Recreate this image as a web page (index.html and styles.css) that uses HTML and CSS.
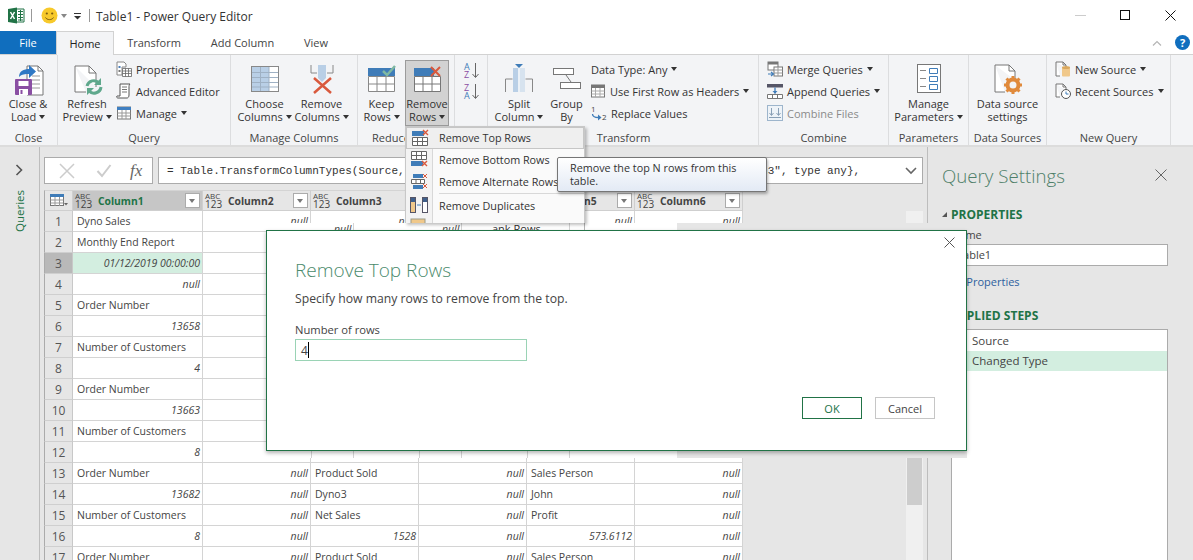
FILE: index.html
```html
<!DOCTYPE html>
<html lang="en">
<head>
    <meta charset="UTF-8">
    <meta name="viewport" content="width=device-width, initial-scale=1.0">
    <title>Table1 - Power Query Editor</title>
    <link rel="stylesheet" href="styles.css">
</head>
<body>

<div class="window">

    <!-- Title bar -->
    <header class="titlebar">
        <svg class="app-icon" width="17" height="17" viewBox="0 0 17 17"><path d="M6 2h10v13H6z" fill="#fff" stroke="#217346"/><path d="M10 4.500h5M10 7.500h5M10 10.500h5M10 13h5M12.500 3v11" stroke="#217346"/><path d="M0 2l9-1.500v16L0 15z" fill="#217346"/><path d="M2.500 5l4 7M6.500 5l-4 7" stroke="#fff" stroke-width="1.500"/></svg>
        <span class="qat-sep"></span>
        <svg class="smiley" width="17" height="17" viewBox="0 0 17 17"><circle cx="8.500" cy="8.500" r="8" fill="#f7c92b"/><circle cx="5.800" cy="6.500" r="1.100" fill="#7a5a10"/><circle cx="11.200" cy="6.500" r="1.100" fill="#7a5a10"/><path d="M4.500 10.500c1.500 2.800 6.500 2.800 8 0" fill="none" stroke="#7a5a10"/></svg>
        <span class="caret caret-grey qat-caret"></span>
        <svg class="qat-custom" width="8" height="8" viewBox="0 0 8 8"><path d="M0 1.500h7" stroke="#333"/><path d="M0 4h7L3.500 7.500z" fill="#333"/></svg>
        <span class="qat-sep qat-sep-2"></span>
        <span class="app-title">Table1 - Power Query Editor</span>
        <div class="win-controls">
            <svg width="11" height="11" viewBox="0 0 11 11"><path d="M0 5.500h11" stroke="#ccc"/></svg>
            <svg width="11" height="11" viewBox="0 0 11 11"><rect x=".5" y=".5" width="9" height="9" fill="none" stroke="#111"/></svg>
            <svg width="11" height="11" viewBox="0 0 11 11"><path d="M.5.500l10 10M10.500.500l-10 10" stroke="#111"/></svg>
        </div>
    </header>

    <!-- Tabs -->
    <nav class="tabs">
        <a class="tab tab-file">File</a>
        <a class="tab tab-home">Home</a>
        <a class="tab tab-transform">Transform</a>
        <a class="tab tab-add">Add Column</a>
        <a class="tab tab-view">View</a>
        <div class="tab-right">
            <svg width="10" height="6" viewBox="0 0 10 6"><path d="M1 5.500l4-4 4 4" fill="none" stroke="#b5b5b5" stroke-width="1.200"/></svg>
            <span class="help">?</span>
        </div>
    </nav>

    <!-- Ribbon -->
    <section class="ribbon">
        <div class="group g-close">
            <div class="group-body">
                <div class="large w56">
                    <div class="large-icon">
                        <svg width="32" height="32" viewBox="0 0 32 32"><path d="M15 3h11l5 5v24H15z" fill="#fff" stroke="#777"/><path d="M26 3v5h5" fill="none" stroke="#777"/><path d="M20 13h8M20 17h8M20 21h8M20 25h8" stroke="#999"/><path d="M7 14c0-6 5-8 10-8V2l7 6.500-7 6.500v-4c-4 0-7 0-10 3z" fill="#2f78c4"/><rect x="3" y="16" width="17" height="16" rx="1" fill="#8a4fa3"/><rect x="6.500" y="18" width="10" height="5" fill="#fff"/><rect x="7" y="26" width="9" height="6" fill="#fff"/><rect x="8.500" y="27" width="2" height="4" fill="#8a4fa3"/></svg>
                    </div>
                    <span>Close &amp;</span>
                    <span>Load <i class="caret"></i></span>
                </div>
            </div>
            <div class="group-label">Close</div>
        </div>

        <div class="group g-query">
            <div class="group-body">
                <div class="large w58">
                    <div class="large-icon">
                        <svg width="30" height="32" viewBox="0 0 30 32"><path d="M3 3h14l7 7v14M14 29H3V3" fill="#fff" stroke="#777"/><path d="M17 3v7h7" fill="none" stroke="#777"/><path d="M15 23a7 7 0 0 1 12-3" fill="none" stroke="#5fa88c" stroke-width="3"/><path d="M29 24a7 7 0 0 1-12 4" fill="none" stroke="#5fa88c" stroke-width="3"/><path d="M29 15v7h-7zM15 32v-7h7z" fill="#5fa88c"/></svg>
                    </div>
                    <span>Refresh</span>
                    <span>Preview <i class="caret"></i></span>
                </div>
                <div class="small-col">
                    <div class="small">
                        <svg width="16" height="16" viewBox="0 0 16 16"><path d="M1 1h7l2 2v3H6v8H1z" fill="#fff" stroke="#888"/><rect x="2.500" y="5" width="2" height="2" fill="#4a7ebb"/><rect x="2.500" y="9" width="2" height="2" fill="#777"/><path d="M6.500 7.500h9v8h-9zM6.500 10h9M6.500 12.500h9M9.500 7.500v8M12.500 7.500v8" fill="#fff" stroke="#666" stroke-width=".8"/></svg>
                        <span>Properties</span>
                    </div>
                    <div class="small">
                        <svg width="16" height="16" viewBox="0 0 16 16"><path d="M4 1h10c-1 1-1 2-1 3v8c0 2-1 3-2 3H2c-1 0-2-1-1-2h3z" fill="#fff" stroke="#555"/><path d="M6 4h5M6 6.500h5M6 9h5" stroke="#777"/></svg>
                        <span>Advanced Editor</span>
                    </div>
                    <div class="small">
                        <svg width="16" height="16" viewBox="0 0 16 16"><rect x="1.500" y="2" width="13" height="12" fill="#fff" stroke="#777"/><rect x="1" y="2" width="14" height="3" fill="#3f7fc1"/><path d="M1.500 8h13M1.500 11h13M6 5v9M10 5v9" stroke="#999"/></svg>
                        <span>Manage</span><i class="caret"></i>
                    </div>
                </div>
            </div>
            <div class="group-label">Query</div>
        </div>

        <div class="group g-manage">
            <div class="group-body">
                <div class="large w57">
                    <div class="large-icon">
                        <svg width="30" height="30" viewBox="0 0 30 30"><rect x="1.500" y="2.500" width="27" height="25" fill="#fff" stroke="#888"/><rect x="2" y="3" width="17" height="24" fill="#b9cfe6"/><path d="M2 8.500h26M2 13.500h26M2 18.500h26M2 23h26M10.500 3v24M19 3v24" stroke="#9fb1c4"/></svg>
                    </div>
                    <span>Choose</span>
                    <span>Columns <i class="caret"></i></span>
                </div>
                <div class="large w57">
                    <div class="large-icon">
                        <svg width="24" height="32" viewBox="0 0 24 32"><path d="M1 2v8h6M23 2v8h-6" fill="none" stroke="#888"/><path d="M8 2h8v13l-4 4-4-4z" fill="#b9cfe6"/><path d="M3 14l17 15M20 14L3 29" stroke="#d9593d" stroke-width="2.500" transform="translate(1 1)"/></svg>
                    </div>
                    <span>Remove</span>
                    <span>Columns <i class="caret"></i></span>
                </div>
            </div>
            <div class="group-label">Manage Columns</div>
        </div>

        <div class="group g-reduce">
            <div class="group-body">
                <div class="large w47">
                    <div class="large-icon">
                        <svg width="29" height="30" viewBox="0 0 29 30"><rect x="1" y="4" width="27" height="8" fill="#3f7cb8"/><path d="M1.500 12.500h26v15h-26zM1.500 20h26M10 12.500v15M19 12.500v15" fill="#fff" stroke="#888"/><path d="M16 7l4 4 8-9" fill="none" stroke="#7fb8a2" stroke-width="2.500"/></svg>
                    </div>
                    <span>Keep</span>
                    <span>Rows <i class="caret"></i></span>
                </div>
                <div class="large w44 active">
                    <div class="large-icon">
                        <svg width="29" height="30" viewBox="0 0 29 30"><rect x="1" y="4" width="20" height="8" fill="#3f7cb8"/><path d="M1.500 12.500h26v15h-26zM1.500 20h26M10 12.500v15M19 12.500v15" fill="#fff" stroke="#777"/><path d="M18 3l9 9M27 3l-9 9" stroke="#d9593d" stroke-width="2"/></svg>
                    </div>
                    <span>Remove</span>
                    <span>Rows <i class="caret"></i></span>
                </div>
            </div>
            <div class="group-label">Reduce Rows</div>
        </div>

        <div class="group g-sort">
            <div class="group-body sort-col">
                <svg width="16" height="17" viewBox="0 0 16 17"><text class="sort-a" x="0" y="8">A</text><text class="sort-z" x="0" y="16">Z</text><path d="M11.500 1v14M8.500 12l3 3.500 3-3.500" fill="none" stroke="#666"/></svg>
                <svg width="16" height="17" viewBox="0 0 16 17"><text class="sort-z" x="0" y="8">Z</text><text class="sort-a" x="0" y="16">A</text><path d="M11.500 1v14M8.500 12l3 3.500 3-3.500" fill="none" stroke="#666"/></svg>
            </div>
            <div class="group-label"></div>
        </div>

        <div class="group g-transform">
            <div class="group-body">
                <div class="large w56">
                    <div class="large-icon">
                        <svg width="30" height="32" viewBox="0 0 30 32"><path d="M1.500 29V16h7M28.500 29V16h-7" fill="none" stroke="#888"/><rect x="9" y="5" width="12" height="24" fill="#d7e3ef"/><rect x="9" y="5" width="5" height="24" fill="#b9cfe6"/><path d="M11 1h8l-4 4z" fill="#3f7cb8"/><path d="M15 5v24" stroke="#fff"/></svg>
                    </div>
                    <span>Split</span>
                    <span>Column <i class="caret"></i></span>
                </div>
                <div class="large w39">
                    <div class="large-icon">
                        <svg width="30" height="24" viewBox="0 0 30 24"><rect x="1.500" y="1.500" width="20" height="6" fill="#fff" stroke="#777"/><rect x="8.500" y="15.500" width="20" height="6" fill="#fff" stroke="#777"/><path d="M14 8l5 7" stroke="#777"/></svg>
                    </div>
                    <span>Group</span>
                    <span>By</span>
                </div>
                <div class="small-col col-data">
                    <div class="small">
                        <span>Data Type: Any</span><i class="caret"></i>
                    </div>
                    <div class="small">
                        <svg width="14" height="14" viewBox="0 0 14 14"><rect x=".5" y="1" width="13" height="12" fill="#fff" stroke="#777"/><rect x="0" y="1" width="14" height="3" fill="#777"/><path d="M.5 7h13M.5 10h13M4.500 4v9M9 4v9" stroke="#aaa"/></svg>
                        <span class="wide-gap">Use First Row as Headers</span><i class="caret"></i>
                    </div>
                    <div class="small">
                        <svg width="16" height="16" viewBox="0 0 16 16"><text class="replace-num" x="0" y="7">1</text><text class="replace-num" x="11" y="15">2</text><path d="M1.500 9c0 3 2 3.500 6 3.500" fill="none" stroke="#3f7cb8" stroke-width="1.300"/><path d="M7 9.500l3.500 3-3.500 3z" fill="#3f7cb8"/></svg>
                        <span>Replace Values</span>
                    </div>
                </div>
            </div>
            <div class="group-label label-transform">Transform</div>
        </div>

        <div class="group g-combine">
            <div class="group-body">
                <div class="small-col">
                    <div class="small">
                        <svg width="16" height="16" viewBox="0 0 16 16"><rect x="1" y="1" width="10" height="8" fill="#fff" stroke="#777"/><rect x="1" y="1" width="10" height="2.500" fill="#777"/><rect x="7" y="6" width="8.500" height="9" fill="#fff" stroke="#777"/><path d="M7 9h8.500M7 12h8.500M11 6v9" stroke="#999"/><path d="M1 13h5M4 11l2.500 2L4 15" fill="none" stroke="#3f7cb8" stroke-width="1.200"/></svg>
                        <span>Merge Queries</span><i class="caret"></i>
                    </div>
                    <div class="small">
                        <svg width="16" height="16" viewBox="0 0 16 16"><rect x="0" y="1" width="16" height="3.500" fill="#556"/><path d="M.5 11.500h15v4H.5zM5.500 11.500v4M10.500 11.500v4" fill="#fff" stroke="#777"/><path d="M8 4.500v6" stroke="#3f7cb8" stroke-width="1.300"/><path d="M5.500 8L8 10.800 10.500 8z" fill="#3f7cb8"/></svg>
                        <span>Append Queries</span><i class="caret"></i>
                    </div>
                    <div class="small small-off">
                        <svg width="16" height="16" viewBox="0 0 16 16"><rect x=".5" y=".5" width="15" height="15" fill="#eef3f8" stroke="#9db5cc"/><path d="M4.500 3v7M11.500 3v7M2 12.500h12" stroke="#8aa0b6"/><path d="M2.500 8l2 2.500 2-2.500M9.500 8l2 2.500 2-2.500" fill="none" stroke="#8aa0b6"/></svg>
                        <span>Combine Files</span>
                    </div>
                </div>
            </div>
            <div class="group-label">Combine</div>
        </div>

        <div class="group g-params">
            <div class="group-body">
                <div class="large w80">
                    <div class="large-icon">
                        <svg width="24" height="30" viewBox="0 0 24 30"><rect x=".5" y=".5" width="23" height="28" fill="#fff" stroke="#777"/><path d="M3 6.500h6M3 14.500h6M3 22.500h6" stroke="#888"/><path d="M12.500 4.500h8v5h-8zM12.500 12.500h8v5h-8zM12.500 20.500h8v5h-8z" fill="#fff" stroke="#3f7cb8"/></svg>
                    </div>
                    <span>Manage</span>
                    <span>Parameters <i class="caret"></i></span>
                </div>
            </div>
            <div class="group-label">Parameters</div>
        </div>

        <div class="group g-data">
            <div class="group-body">
                <div class="large w78">
                    <div class="large-icon">
                        <svg width="28" height="30" viewBox="0 0 28 30"><path d="M1 1h14l6 6v9M11 28H1V1" fill="#fff" stroke="#777"/><path d="M15 1v6h6" fill="none" stroke="#777"/><circle cx="19" cy="21" r="5.500" fill="none" stroke="#e08a3c" stroke-width="4"/><path d="M19 12v4M19 26v4M10 21h4M24 21h4M12.500 14.500l3 3M22.500 24.500l3 3M25.500 14.500l-3 3M15.500 24.500l-3 3" stroke="#e08a3c" stroke-width="3"/></svg>
                    </div>
                    <span>Data source</span>
                    <span>settings</span>
                </div>
            </div>
            <div class="group-label">Data Sources</div>
        </div>

        <div class="group g-new">
            <div class="group-body">
                <div class="small-col col-new">
                    <div class="small">
                        <svg width="16" height="16" viewBox="0 0 16 16"><path d="M1 1h7l3 3v3M5 15H1V1" fill="#fff" stroke="#777"/><path d="M8 1v3h3" fill="none" stroke="#777"/><rect x="7" y="6" width="8" height="9.500" rx="1" fill="#f0c88a"/><ellipse cx="11" cy="6.500" rx="4" ry="1.500" fill="#d9a85f"/></svg>
                        <span>New Source</span><i class="caret"></i>
                    </div>
                    <div class="small">
                        <svg width="16" height="16" viewBox="0 0 16 16"><path d="M1 1h7l3 3v3M5 14H1V1" fill="#fff" stroke="#777"/><path d="M8 1v3h3" fill="none" stroke="#777"/><circle cx="11" cy="11" r="4.500" fill="#fff" stroke="#555"/><path d="M11 8.500V11h2.500" fill="none" stroke="#3f7cb8"/></svg>
                        <span>Recent Sources</span><i class="caret"></i>
                    </div>
                </div>
            </div>
            <div class="group-label">New Query</div>
        </div>
    </section>

    <!-- Main area -->
    <main class="main">
        <aside class="queries">
            <svg width="9" height="12" viewBox="0 0 9 12"><path d="M1.500 1l5 5-5 5" fill="none" stroke="#555" stroke-width="1.600"/></svg>
            <span class="queries-label">Queries</span>
        </aside>

        <section class="center">
            <div class="formula-row">
                <div class="formula-btns">
                    <svg width="16" height="16" viewBox="0 0 16 16"><path d="M1 1l14 14M15 1L1 15" stroke="#ccc" stroke-width="1.500"/></svg>
                    <svg width="16" height="14" viewBox="0 0 16 14"><path d="M1.500 7l4.500 5 8.500-11" fill="none" stroke="#ccc" stroke-width="2"/></svg>
                    <span class="fx">fx</span>
                </div>
                <div class="formula-input">
                    <span class="formula-text">= Table.TransformColumnTypes(Source,{{"Column1", type any}, {"Column2", type any}, {"Column3", type any},</span>
                    <svg width="12" height="7" viewBox="0 0 12 7"><path d="M1 1l5 5 5-5" fill="none" stroke="#666" stroke-width="1.600"/></svg>
                </div>
            </div>

            <div class="grid-row">
                <table class="data-table">
                    <colgroup>
                        <col class="col-num"><col class="col-first"><col class="col-rest"><col class="col-rest"><col class="col-rest"><col class="col-rest"><col class="col-rest">
                    </colgroup>
                    <thead>
                        <tr>
                            <th class="corner">
                                <svg width="18" height="13" viewBox="0 0 18 13"><rect x=".5" y=".5" width="13" height="11" fill="#fff" stroke="#777"/><rect x="0" y="0" width="14" height="3" fill="#3f7cb8"/><path d="M.5 6h13M.5 9h13M5 3v9M9.500 3v9" stroke="#999"/><path d="M14 9h4l-2 2.500z" fill="#666"/></svg>
                            </th>
                            <th class="head-selected"><div class="head"><span class="type">ABC<b>123</b></span><span class="head-name green">Column1</span><span class="drop"></span></div></th>
                            <th><div class="head"><span class="type">ABC<b>123</b></span><span class="head-name">Column2</span><span class="drop"></span></div></th>
                            <th><div class="head"><span class="type">ABC<b>123</b></span><span class="head-name">Column3</span></div></th>
                            <th></th>
                            <th><div class="head head-clip"><span class="head-name">Column5</span><span class="drop"></span></div></th>
                            <th><div class="head"><span class="type">ABC<b>123</b></span><span class="head-name">Column6</span><span class="drop"></span></div></th>
                        </tr>
                    </thead>
                    <tbody>
                        <tr><th>1</th><td>Dyno Sales</td><td class="n">null</td><td class="n">null</td><td></td><td class="n">null</td><td class="n">null</td></tr>
                        <tr><th>2</th><td>Monthly End Report</td><td></td><td></td><td></td><td></td><td></td></tr>
                        <tr class="row-selected"><th>3</th><td class="n">01/12/2019 00:00:00</td><td></td><td></td><td></td><td></td><td></td></tr>
                        <tr><th>4</th><td class="n">null</td><td></td><td></td><td></td><td></td><td></td></tr>
                        <tr><th>5</th><td>Order Number</td><td></td><td></td><td></td><td></td><td></td></tr>
                        <tr><th>6</th><td class="n">13658</td><td></td><td></td><td></td><td></td><td></td></tr>
                        <tr><th>7</th><td>Number of Customers</td><td></td><td></td><td></td><td></td><td></td></tr>
                        <tr><th>8</th><td class="n">4</td><td></td><td></td><td></td><td></td><td></td></tr>
                        <tr><th>9</th><td>Order Number</td><td></td><td></td><td></td><td></td><td></td></tr>
                        <tr><th>10</th><td class="n">13663</td><td></td><td></td><td></td><td></td><td></td></tr>
                        <tr><th>11</th><td>Number of Customers</td><td></td><td></td><td></td><td></td><td></td></tr>
                        <tr><th>12</th><td class="n">8</td><td></td><td></td><td></td><td></td><td></td></tr>
                        <tr><th>13</th><td>Order Number</td><td class="n">null</td><td>Product Sold</td><td class="n">null</td><td>Sales Person</td><td class="n">null</td></tr>
                        <tr><th>14</th><td class="n">13682</td><td class="n">null</td><td>Dyno3</td><td class="n">null</td><td>John</td><td class="n">null</td></tr>
                        <tr><th>15</th><td>Number of Customers</td><td class="n">null</td><td>Net Sales</td><td class="n">null</td><td>Profit</td><td class="n">null</td></tr>
                        <tr><th>16</th><td class="n">8</td><td class="n">null</td><td class="n">1528</td><td class="n">null</td><td class="n">573.6112</td><td class="n">null</td></tr>
                        <tr><th>17</th><td>Order Number</td><td class="n">null</td><td>Product Sold</td><td class="n">null</td><td>Sales Person</td><td class="n">null</td></tr>
                    </tbody>
                </table>
                <div class="scrollbar"><div class="thumb"></div></div>
            </div>
        </section>

        <aside class="settings">
            <div class="settings-head">
                <h2>Query Settings</h2>
                <svg width="12" height="12" viewBox="0 0 12 12"><path d="M.5.500l11 11M11.500.500l-11 11" stroke="#666"/></svg>
            </div>
            <h3 class="section-title"><i class="tri"></i>PROPERTIES</h3>
            <label class="field-label">Name</label>
            <div class="name-input">Table1</div>
            <a class="all-props">All Properties</a>
            <h3 class="section-title steps-title"><i class="tri"></i>APPLIED STEPS</h3>
            <ul class="steps">
                <li>Source</li>
                <li class="step-on">Changed Type</li>
            </ul>
        </aside>
    </main>

    <!-- Stale repaint bands left round the dialog -->
    <div class="ghost ghost-top">
        <span class="ghost-null ghost-null-1">null</span>
        <span class="ghost-null ghost-null-2">null</span>
        <span class="ghost-menu">ank Rows</span>
    </div>
    <div class="ghost ghost-bottom"></div>

    <!-- Remove Rows menu -->
    <div class="menu">
        <div class="menu-item menu-item-on">
            <span class="menu-icon"><svg width="18" height="18" viewBox="0 0 18 18"><rect x="1" y="2" width="12" height="5" fill="#3f7cb8"/><path d="M1.500 8.500h15v8h-15zM1.500 12.500h15M6.500 8.500v8M11.500 8.500v8" fill="#fff" stroke="#666"/><path d="M12 1l5 5M17 1l-5 5" stroke="#d9593d" stroke-width="1.400"/></svg></span>
            <span>Remove Top Rows</span>
        </div>
        <div class="menu-item">
            <span class="menu-icon"><svg width="18" height="18" viewBox="0 0 18 18"><path d="M1.500 1.500h15v8h-15zM1.500 5.500h15M6.500 1.500v8M11.500 1.500v8" fill="#fff" stroke="#666"/><rect x="1" y="11" width="12" height="5" fill="#3f7cb8"/><path d="M12 11l5 5M17 11l-5 5" stroke="#d9593d" stroke-width="1.400"/></svg></span>
            <span>Remove Bottom Rows</span>
        </div>
        <div class="menu-item">
            <span class="menu-icon"><svg width="18" height="18" viewBox="0 0 18 18"><rect x="3" y="2" width="10" height="4" fill="#3f7cb8"/><path d="M1.500 7.500h13v4h-13zM6 7.500v4M10.500 7.500v4" fill="#fff" stroke="#666"/><rect x="3" y="13" width="10" height="4" fill="#3f7cb8"/><path d="M13 2l4 4M17 2l-4 4M13 12l4 4M17 12l-4 4" stroke="#d9593d"/></svg></span>
            <span class="menu-clip">Remove Alternate Rows</span>
        </div>
        <div class="menu-sep"></div>
        <div class="menu-item">
            <span class="menu-icon"><svg width="18" height="18" viewBox="0 0 18 18"><rect x=".5" y="1.500" width="5" height="15" fill="#f0c88a" stroke="#556"/><rect x="12.500" y="1.500" width="5" height="15" fill="#fff" stroke="#556"/><rect x="1" y="2" width="4" height="4" fill="#3f5f8a"/><rect x="13" y="2" width="4" height="4" fill="#3f5f8a"/><path d="M7 9h4" stroke="#3f7cb8"/></svg></span>
            <span>Remove Duplicates</span>
        </div>
        <div class="menu-item">
            <span class="menu-icon"><svg width="18" height="18" viewBox="0 0 18 18"><rect x="1" y="1" width="14" height="14" fill="#f0c88a" stroke="#998"/></svg></span>
        </div>
    </div>

    <!-- Tooltip for the menu item -->
    <div class="tooltip">Remove the top N rows from this table.</div>

    <!-- Dialog -->
    <div class="dialog">
        <svg class="dialog-close" width="11" height="11" viewBox="0 0 11 11"><path d="M.5.500l10 10M10.500.500l-10 10" stroke="#555"/></svg>
        <h1 class="dialog-title">Remove Top Rows</h1>
        <p class="dialog-desc">Specify how many rows to remove from the top.</p>
        <label class="dialog-label">Number of rows</label>
        <div class="dialog-input"><span>4</span><i class="text-caret"></i></div>
        <div class="dialog-buttons">
            <button class="btn btn-ok">OK</button>
            <button class="btn">Cancel</button>
        </div>
    </div>

</div>

</body>
</html>
```

FILE: styles.css
```css
* {
    box-sizing: border-box;
}
body {
    margin: 0;
    font-family: "Open Sans", "Noto Sans", Arial, sans-serif;
    font-size: 11px;
    color: #444;
    background-color: #fff;
    overflow: hidden;
}
.window {
    position: relative;
    width: 1193px;
    height: 560px;
    overflow: hidden;
}
svg {
    display: block;
    flex: none;
    overflow: visible;
}

/* title bar */
.titlebar {
    display: flex;
    align-items: center;
    height: 31px;
    padding-left: 8px;
}
.qat-sep {
    width: 1px;
    height: 13px;
    margin: 0 9px 0 6px;
    background-color: #999;
}
.qat-caret {
    margin: 0 7px 0 3px;
    align-self: center;
}
.qat-sep-2 {
    margin: 0 6px 0 7px;
}
.app-title {
    padding-top: 1px;
    font-size: 12px;
    color: #333;
}
.win-controls {
    display: flex;
    gap: 34px;
    margin-left: auto;
    padding-right: 17px;
}

/* tabs */
.tabs {
    display: flex;
    height: 24px;
    border-bottom: 1px solid #d2d2d2;
    position: relative;
}
.tab {
    display: flex;
    align-items: center;
    justify-content: center;
    height: 23px;
    font-size: 11px;
    color: #444;
}
.tab-file {
    width: 56px;
    background-color: #106ebe;
    color: #fff;
}
.tab-home {
    width: 58px;
    height: 24px;
    padding-bottom: 1px;
    background-color: #f3f4f6;
    border: 1px solid #d2d2d2;
    border-bottom: none;
    color: #222;
}
.tab-transform {
    width: 80px;
}
.tab-add {
    width: 97px;
}
.tab-view {
    width: 50px;
}
.tab-right {
    display: flex;
    align-items: center;
    gap: 13px;
    margin-left: auto;
    padding-right: 3px;
}
.help {
    width: 15px;
    height: 15px;
    border-radius: 50%;
    background-color: #106ebe;
    color: #fff;
    font-size: 11px;
    font-weight: 700;
    line-height: 15px;
    text-align: center;
}

/* ribbon */
.ribbon {
    display: flex;
    height: 92px;
    background-color: #f3f4f6;
    border-bottom: 2px solid #dcdcdc;
}
.group {
    display: flex;
    flex-direction: column;
    height: 90px;
    border-right: 1px solid #dcdddf;
}
.g-close { width: 58px; }
.g-query { width: 173px; }
.g-manage { width: 127px; }
.g-reduce { width: 97px; }
.g-sort { width: 33px; }
.g-transform { width: 271px; }
.g-combine { width: 130px; }
.g-params { width: 80px; }
.g-data { width: 78px; }
.g-new { width: 124px; }
.group-body {
    display: flex;
    flex: 1;
    padding-top: 5px;
}
.g-manage .group-body {
    padding-left: 5px;
}
.g-transform .group-body {
    padding-left: 3px;
}
.group-label {
    height: 14px;
    line-height: 14px;
    text-align: center;
    color: #444;
    white-space: nowrap;
}
.label-transform {
    padding-left: 1px;
}
.large {
    display: flex;
    flex-direction: column;
    align-items: center;
    height: 66px;
    line-height: 13px;
    color: #333;
    white-space: nowrap;
}
.large-icon {
    display: flex;
    align-items: center;
    justify-content: center;
    flex: none;
    height: 37px;
}
.large.active {
    background-color: #d2d2d2;
    box-shadow: inset 0 0 0 1px #9b9b9b;
}
.w39 { width: 39px; }
.w44 { width: 44px; }
.w47 { width: 47px; }
.w56 { width: 56px; }
.w57 { width: 57px; }
.w58 { width: 58px; }
.w78 { width: 78px; }
.w80 { width: 80px; }
.small-col {
    display: flex;
    flex-direction: column;
    margin-top: -2px;
}
.col-data {
    margin-left: 5px;
}
.g-combine .small-col {
    padding-left: 8px;
}
.col-new {
    padding-left: 8px;
}
.small {
    display: flex;
    align-items: center;
    gap: 4px;
    height: 22px;
    color: #333;
    white-space: nowrap;
}
.small-off {
    color: #8a8a8a;
}
.wide-gap {
    margin-left: 1px;
}
.caret {
    display: inline-block;
    width: 0;
    height: 0;
    border-left: 3.5px solid transparent;
    border-right: 3.5px solid transparent;
    border-top: 4px solid #333;
    vertical-align: 2px;
}
.caret-grey {
    border-top-color: #888;
}
.sort-col {
    flex-direction: column;
    gap: 4px;
    padding: 7px 0 0 9px;
}
.sort-a,
.sort-z {
    font-size: 9px;
}
.sort-a {
    fill: #3f7cb8;
}
.sort-z {
    fill: #8a4fa3;
}
.replace-num {
    font-size: 8px;
    fill: #444;
}

/* main area */
.main {
    display: flex;
    height: 413px;
    background-color: #e6e6e6;
}
.queries {
    display: flex;
    flex-direction: column;
    align-items: center;
    gap: 14px;
    width: 40px;
    padding-top: 17px;
    border-right: 1px solid #bdbdbd;
}
.queries-label {
    writing-mode: vertical-rl;
    transform: rotate(180deg);
    font-size: 11.5px;
    color: #217346;
}
.center {
    display: flex;
    flex-direction: column;
    width: 887px;
    padding: 10px 4px 0;
}
.formula-row {
    display: flex;
    flex: none;
    gap: 5px;
    height: 27px;
}
.formula-btns {
    display: flex;
    align-items: center;
    gap: 21px;
    width: 109px;
    padding-left: 14px;
    background-color: #fff;
    border: 1px solid #ababab;
}
.fx {
    font-family: "Liberation Serif", serif;
    font-size: 17px;
    font-style: italic;
    color: #666;
    margin-left: -3px;
}
.formula-input {
    display: flex;
    align-items: center;
    justify-content: space-between;
    flex: 1;
    padding: 0 5px 0 8px;
    background-color: #fff;
    border: 1px solid #ababab;
}
.formula-text {
    font-family: "Liberation Mono", monospace;
    font-size: 11px;
    color: #333;
    white-space: pre;
}
.grid-row {
    display: flex;
    flex: none;
    justify-content: space-between;
    margin-top: 6px;
}
.data-table {
    width: 699px;
    table-layout: fixed;
    border-collapse: separate;
    border-spacing: 0;
    flex: none;
    font-size: 10.5px;
}
.col-num { width: 29px; }
.col-first { width: 130px; }
.col-rest { width: 108px; }
.data-table thead th {
    height: 21px;
    padding: 0;
    background-color: #e6e6e6;
    border-top: 1px solid #d4d4d4;
    border-right: 1px solid #cfcfcf;
    border-bottom: 1px solid #cfcfcf;
    font-weight: 400;
}
.data-table .corner {
    background-color: #e6e6e6;
    border-left: 1px solid #ababab;
    padding-left: 5px;
}
.data-table .head-selected {
    background-color: #c6c6c6;
}
.head {
    display: flex;
    align-items: center;
    height: 19px;
    padding: 0 2px;
}
.head-clip {
    padding-left: 18px;
}
.type {
    display: flex;
    flex-direction: column;
    width: 17px;
    font-size: 8px;
    line-height: 8px;
    color: #444;
    text-align: left;
}
.type b {
    font-size: 10px;
    font-weight: 400;
    line-height: 9px;
}
.head-name {
    margin-left: 6px;
    font-weight: 700;
    font-size: 10.3px;
    color: #444;
}
.green {
    color: #217346;
}
.drop {
    position: relative;
    width: 15px;
    height: 15px;
    margin-left: auto;
    background-color: #fff;
    border: 1px solid #ababab;
}
.drop::after {
    content: "";
    position: absolute;
    top: 5px;
    left: 3px;
    border-left: 3.5px solid transparent;
    border-right: 3.5px solid transparent;
    border-top: 4px solid #777;
}
.data-table tbody th {
    height: 21px;
    padding: 0;
    background-color: #e6e6e6;
    border-left: 1px solid #ababab;
    border-right: 1px solid #c8c8c8;
    border-bottom: 1px solid #cfcfcf;
    font-size: 12px;
    font-weight: 400;
    color: #555;
}
.data-table td {
    height: 21px;
    padding: 0 2px 0 4px;
    background-color: #fff;
    border-right: 1px solid #d4d4d4;
    border-bottom: 1px solid #d4d4d4;
    color: #444;
    white-space: nowrap;
    overflow: hidden;
}
.data-table td.n {
    text-align: right;
    font-style: italic;
}
.row-selected th {
    background-color: #b9b9b9 !important;
}
.row-selected td:nth-child(2) {
    background-color: #d3eee0;
}
.scrollbar {
    width: 17px;
    height: 357px;
    margin-top: 21px;
    padding: 12px 1px 0;
    background-color: #f0f0f0;
}
.thumb {
    height: 282px;
    background-color: #cdcdcd;
}

/* query settings */
.settings {
    flex: 1;
    padding-left: 14px;
    border-left: 1px solid #bdbdbd;
}
.settings-head {
    display: flex;
    align-items: center;
    justify-content: space-between;
    height: 26px;
    margin-top: 15px;
    padding-right: 26px;
}
.settings-head h2 {
    margin: 0;
    font-size: 18.7px;
    font-weight: 300;
    color: #4f7f69;
}
.section-title {
    position: relative;
    margin: 18px 0 0;
    padding-left: 9px;
    font-size: 12px;
    font-weight: 700;
    line-height: 17px;
    color: #217346;
}
.tri {
    position: absolute;
    top: 6px;
    left: 0;
    width: 0;
    height: 0;
    border-left: 5px solid transparent;
    border-bottom: 5px solid #555;
}
.field-label {
    display: block;
    margin: 4px 0 0 9px;
    line-height: 16px;
}
.name-input {
    width: 217px;
    height: 22px;
    margin: 1px 0 0 9px;
    padding-left: 5px;
    background-color: #fff;
    border: 1px solid #ababab;
    line-height: 20px;
}
.all-props {
    display: block;
    margin: 8px 0 0 9px;
    line-height: 16px;
    color: #2e5f9e;
}
.steps-title {
    margin-top: 17px;
}
.steps {
    width: 217px;
    height: 240px;
    margin: 5px 0 0 9px;
    padding: 1px 0 0;
    list-style: none;
    background-color: #fff;
    border: 1px solid #ababab;
    font-size: 11.5px;
}
.steps li {
    height: 20px;
    padding-left: 20px;
    line-height: 20px;
}
.step-on {
    background-color: #d3eee0;
}

/* stale bands round the dialog */
.ghost {
    position: absolute;
    height: 8px;
    overflow: hidden;
}
.ghost-top {
    top: 223px;
    left: 254px;
    width: 713px;
    height: 7px;
    background:
        linear-gradient(#d4d4d4, #d4d4d4) 99px 0 / 1px 100% no-repeat,
        linear-gradient(#d4d4d4, #d4d4d4) 207px 0 / 1px 100% no-repeat,
        linear-gradient(#d4d4d4, #d4d4d4) 315px 0 / 1px 100% no-repeat,
        linear-gradient(#b5b5b5, #b5b5b5) 330px 0 / 1px 100% no-repeat,
        linear-gradient(90deg, #fff 423px, #e6e6e6 423px);
}
.ghost-null {
    position: absolute;
    top: -1px;
    font-size: 10.5px;
    font-style: italic;
    line-height: 14px;
}
.ghost-null-1 { left: 80px; }
.ghost-null-2 { left: 188px; }
.ghost-menu {
    position: absolute;
    top: -1px;
    left: 238px;
    line-height: 14px;
    color: #333;
}
.ghost-bottom {
    top: 450px;
    left: 267px;
    width: 700px;
    background:
        linear-gradient(#d4d4d4, #d4d4d4) 44px 0 / 1px 100% no-repeat,
        linear-gradient(#d4d4d4, #d4d4d4) 86px 0 / 1px 100% no-repeat,
        linear-gradient(#d4d4d4, #d4d4d4) 152px 0 / 1px 100% no-repeat,
        linear-gradient(#d4d4d4, #d4d4d4) 194px 0 / 1px 100% no-repeat,
        linear-gradient(#d4d4d4, #d4d4d4) 260px 0 / 1px 100% no-repeat,
        linear-gradient(#d4d4d4, #d4d4d4) 302px 0 / 1px 100% no-repeat,
        linear-gradient(90deg, #fff 410px, #e6e6e6 410px);
}

/* menu */
.menu {
    position: absolute;
    top: 126px;
    left: 405px;
    width: 180px;
    height: 97px;
    overflow: hidden;
    background: linear-gradient(90deg, #f3f3f3 26px, #d8d8d8 26px, #d8d8d8 27px, #fafafa 27px);
    border: 1px solid #c8c8c8;
    border-bottom: none;
    box-shadow: 2px 2px 3px rgba(0, 0, 0, 0.25);
    font-size: 10.8px;
}
.menu-item {
    display: flex;
    align-items: center;
    height: 22px;
    padding-bottom: 2px;
    color: #333;
    white-space: nowrap;
}
.menu-item-on {
    background-color: #efefef;
    border: 1px solid #c6c6c6;
    padding-bottom: 1px;
}
.menu-item-on .menu-icon {
    margin-right: 6px;
}
.menu-icon {
    display: flex;
    justify-content: center;
    width: 26px;
    margin-right: 7px;
}
.menu-clip {
    width: 118px;
    overflow: hidden;
}
.menu-sep {
    height: 1px;
    margin: 0 0 1px 33px;
    background-color: #d8d8d8;
}

/* tooltip */
.tooltip {
    position: absolute;
    top: 157px;
    left: 557px;
    width: 210px;
    height: 35px;
    padding: 3px 12px 0 12px;
    background: linear-gradient(#fff, #e3eaf5);
    border: 1px solid #767676;
    border-radius: 2px;
    box-shadow: 1px 2px 3px rgba(0, 0, 0, 0.3);
    font-size: 10.8px;
    line-height: 13px;
    color: #333;
}

/* dialog */
.dialog {
    position: absolute;
    top: 230px;
    left: 266px;
    width: 701px;
    height: 221px;
    padding: 27px 28px 0;
    background-color: #fff;
    border: 1px solid #217346;
    box-shadow: 0 2px 4px rgba(0, 0, 0, 0.3);
}
.dialog-close {
    position: absolute;
    top: 6px;
    right: 11px;
}
.dialog-title {
    margin: 0;
    font-size: 19px;
    font-weight: 300;
    line-height: 24px;
    color: #4a8a6c;
}
.dialog-desc {
    margin: 8px 0 0;
    font-size: 12.2px;
    line-height: 17px;
    color: #444;
}
.dialog-label {
    display: block;
    margin-top: 15px;
    font-size: 11.2px;
    line-height: 15px;
}
.dialog-input {
    display: flex;
    align-items: center;
    width: 232px;
    height: 22px;
    margin-top: 2px;
    padding-left: 5px;
    border: 1px solid #9ad3b5;
    font-size: 12px;
}
.text-caret {
    width: 1px;
    height: 16px;
    background-color: #000;
}
.dialog-buttons {
    position: absolute;
    top: 166px;
    right: 31px;
    display: flex;
    gap: 13px;
}
.btn {
    width: 60px;
    height: 22px;
    padding: 0;
    background-color: #fff;
    border: 1px solid #c6c6c6;
    font-family: inherit;
    font-size: 11px;
    color: #444;
}
.btn-ok {
    border-color: #217346;
    color: #217346;
}
```
